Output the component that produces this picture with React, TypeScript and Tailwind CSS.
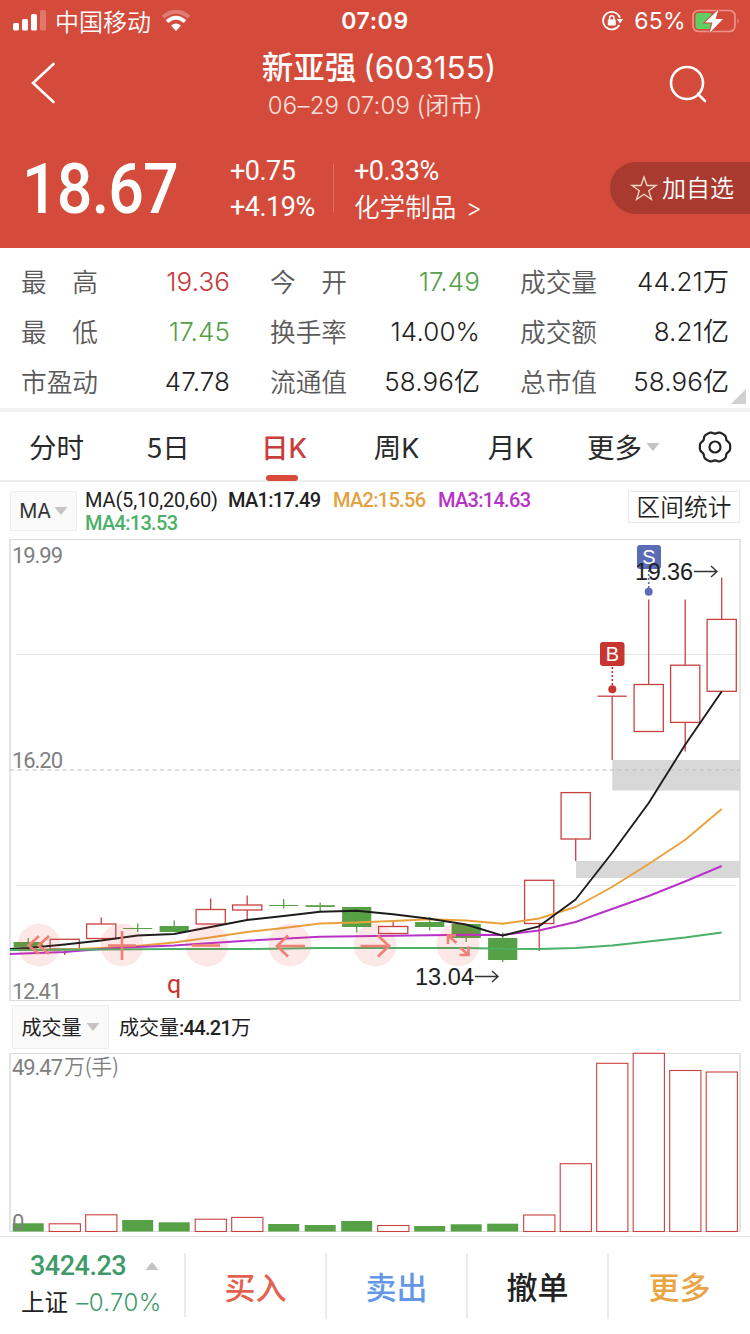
import React from "react";

type Quote = { label: string; value: string; color?: string };

type Candle = {
	up: boolean;
	top: number;
	bottom: number;
	high?: number;
	low?: number;
	volTop: number;
};

const STEP = 36.5;
const FIRST_X = 28.2;
const RED = "#c9403f";
const GREEN = "#56a045";

const quotes: Quote[][] = [
	[
		{ label: "最　高", value: "19.36", color: "text-[#c4383a]" },
		{ label: "今　开", value: "17.49", color: "text-[#549f48]" },
		{ label: "成交量", value: "44.21万" },
	],
	[
		{ label: "最　低", value: "17.45", color: "text-[#549f48]" },
		{ label: "换手率", value: "14.00%" },
		{ label: "成交额", value: "8.21亿" },
	],
	[
		{ label: "市盈动", value: "47.78" },
		{ label: "流通值", value: "58.96亿" },
		{ label: "总市值", value: "58.96亿" },
	],
];

const candles: Candle[] = [
	{ up: false, top: 942, bottom: 947.5, high: 938, low: 949, volTop: 1223.3 },
	{ up: true, top: 939.3, bottom: 949, low: 955, volTop: 1223.8 },
	{ up: true, top: 924, bottom: 938.5, high: 917.5, volTop: 1214.8 },
	{ up: false, top: 928, bottom: 929, high: 923.5, low: 932, volTop: 1220 },
	{ up: false, top: 926, bottom: 932, high: 920.5, volTop: 1222.3 },
	{ up: true, top: 909.5, bottom: 924, high: 898.5, volTop: 1219.2 },
	{ up: true, top: 905, bottom: 910, high: 895.5, low: 920, volTop: 1217.4 },
	{ up: false, top: 905, bottom: 906, high: 899, low: 908.5, volTop: 1224 },
	{ up: false, top: 905.2, bottom: 907, high: 902.5, low: 911, volTop: 1225 },
	{ up: false, top: 907, bottom: 927, low: 932.5, volTop: 1221 },
	{ up: true, top: 926.5, bottom: 933.5, high: 920.5, volTop: 1225.5 },
	{ up: false, top: 922, bottom: 927, high: 917, low: 930.5, volTop: 1226 },
	{ up: false, top: 924, bottom: 938, low: 942, volTop: 1224.3 },
	{ up: false, top: 938, bottom: 960, high: 932.5, low: 962, volTop: 1223.7 },
	{ up: true, top: 880.3, bottom: 923.5, low: 951, volTop: 1215 },
	{ up: true, top: 792.6, bottom: 839, low: 861, volTop: 1163.7 },
	{ up: true, top: 696.2, bottom: 696.2, low: 760, volTop: 1063.3 },
	{ up: true, top: 684.5, bottom: 731.5, high: 599.5, volTop: 1053.3 },
	{ up: true, top: 665.2, bottom: 722.4, high: 599.5, low: 751.5, volTop: 1070.5 },
	{ up: true, top: 619.4, bottom: 691.3, high: 577.5, volTop: 1072 },
];

const averages = [
	{
		color: "#e9a23b",
		points: "10,950 64.7,949.5 101,948 137,946 174,942.5 210,937.5 247,932 283.7,928 320,923.5 356,922.5 393,921 429.7,919.3 466,920.5 502.6,923.8 539,918.5 575.6,907 612,887 648.7,864 685,840 721.7,809",
	},
	{
		color: "#b832c8",
		points: "10,954 64.7,952 101,949 137,947 174,945.5 250,940.5 320,936.7 393,935.8 466,934.7 502,935 539,930.5 575.6,922 612,909 648.7,896 685,881.5 721.7,866",
	},
	{
		color: "#1d1d1d",
		points: "10,949 28,948 64.7,944.5 101,940.5 137.7,935.5 174,934 210.7,927 247,920 283.7,916 320,911.8 356.7,910.8 393,914.3 429.7,918.7 466,924.5 502.6,935.7 539,926.3 575.6,899.5 612,853 648.7,803 685,745 721.7,691.5",
	},
	{
		color: "#4cb068",
		points: "10,950 101,949.5 174,949 250,949 320,948 466,948 502,948.8 539,949 575.6,948 612,945.5 648.7,941.5 685,937.5 721.7,932.5",
	},
];

const controls = [39, 122, 207, 290, 375, 458];

// six-lobed outline of the settings gear
const gearPoints = Array.from({ length: 72 }, (_, i) => {
	const a = (i / 72) * Math.PI * 2;
	const r = 14.6 + 0.9 * Math.cos(a * 6) - 0.35 * Math.cos(a * 12);
	return `${(r * Math.cos(a)).toFixed(2)},${(r * Math.sin(a)).toFixed(2)}`;
}).join(" ");

function StatusBar() {
	return (
		<div className="grid h-10 grid-cols-3 items-center text-white">
			<div className="flex items-center pl-3">
				<svg width="34" height="22" viewBox="0 0 34 22" fill="#fff">
					<rect x="1" y="13" width="6" height="7.500" rx="1.500" />
					<rect x="10" y="9" width="6" height="11.500" rx="1.500" />
					<rect x="19" y="4" width="6" height="16.500" rx="1.500" />
					<rect x="28" y="0" width="6" height="20.500" rx="1.500" opacity=".25" />
				</svg>
				<span className="ml-[9px] text-[24px] font-[350] leading-[36px]">中国移动</span>
				<svg className="ml-[10px]" width="30" height="22" viewBox="0 0 30 22" fill="none" stroke="#fff">
					<path d="M2 7Q15 -3.500 28 7" strokeWidth="4" opacity=".28" />
					<path d="M6 11.500Q15 4 24 11.500" strokeWidth="4" />
					<path d="M10 15.500Q15 11.500 20 15.500L15 21Z" fill="#fff" stroke="none" />
				</svg>
			</div>
			<div className="text-center font-['Inter'] text-[23px] font-semibold leading-10 tracking-[0.6px]">07:09</div>
			<div className="flex items-center justify-end pr-[10px]">
				<svg width="22" height="20" viewBox="0 0 22 20" fill="none" stroke="#fff" strokeWidth="1.800">
					<path d="M18 7A8.700 8.700 0 1 0 17.300 14" />
					<path d="M14.800 8h6.400l-3.200 4.400z" fill="#fff" stroke="none" />
					<rect x="5.800" y="8.500" width="8" height="6" rx="1" fill="#fff" stroke="none" />
					<path d="M7.600 9V7a2.200 2.200 0 0 1 4.400 0v2" strokeWidth="1.500" />
				</svg>
				<span className="ml-[10px] font-['Inter'] text-[23px] leading-[42px] tracking-[0.3px]">65%</span>
				<svg className="ml-[6px]" width="48" height="24" viewBox="0 0 48 24">
					<rect x="1" y="1.500" width="42" height="21" rx="5.500" fill="none" stroke="#ee958b" strokeWidth="1.600" />
					<path d="M45.500 9q2.500 3 0 6z" fill="#ee958b" />
					<rect x="3.500" y="4" width="16.500" height="16" rx="3" fill="#5fcf63" />
					<path d="M26.500 0.500L13 13.500h7.500l-3 10.500L31 10h-7.500z" fill="#fff" stroke="#d44b3c" strokeWidth="2" paintOrder="stroke" />
				</svg>
			</div>
		</div>
	);
}

function Header() {
	return (
		<header className="h-[248px] bg-[#d44b3c] text-white">
			<StatusBar />
			<div className="flex h-[88px] items-start justify-between pl-[30px] pr-[43px]">
				<svg className="mt-[22px]" width="26" height="42" viewBox="0 0 26 42" fill="none" stroke="#fff" strokeWidth="2.600">
					<path d="M23.500 2L3 21l20.500 19" strokeLinecap="round" />
				</svg>
				<div className="ml-[25px] flex flex-col items-center">
					<h1 className="ml-[8px] mt-[5px] whitespace-nowrap text-[31.500px] font-medium leading-10">
						新亚强 <span className="font-['Inter'] text-[31.500px] font-normal tracking-[0px]">(603155)</span>
					</h1>
					<p className="mt-[-2px] whitespace-nowrap text-[24px] font-[350] leading-[36px] text-[#fce0dc]">
						<span className="font-['Inter'] text-[24px] tracking-[0.200px]">06–29 07:09 </span>
						<span className="tracking-[0.300px]">(闭市)</span>
					</p>
				</div>
				<svg className="mt-[25px]" width="38" height="38" viewBox="0 0 38 38" fill="none" stroke="#fff" strokeWidth="2.600">
					<circle cx="18" cy="18" r="16" />
					<path d="M29 29l7 7" strokeLinecap="round" />
				</svg>
			</div>
			<div className="flex h-[120px] items-start">
				<div className="w-[230px] pl-[22px] pt-[25px] font-['Roboto'] text-[71px] font-medium leading-[71px]">
					<span className="inline-block origin-left scale-x-[0.885] tracking-[-1px]">18.67</span>
				</div>
				<div className="w-[103px] pt-[25px] font-['Roboto'] text-[27px] leading-9 tracking-[-0.500px]">
					<div>+0.75</div>
					<div>+4.19%</div>
				</div>
				<div className="mt-9 h-12 w-px bg-[#e07064]" />
				<div className="w-[276px] pl-5 pt-[25px] leading-9">
					<div className="font-['Roboto'] text-[27px] tracking-[-0.500px]">+0.33%</div>
					<div className="mt-[-1px] text-[25.600px] font-[350]">
						化学制品 <span className="ml-[4px] font-['Inter'] text-[24px]">&gt;</span>
					</div>
				</div>
				<button
					type="button"
					className="mt-[34px] flex h-[52px] flex-1 items-center rounded-l-full bg-[#a93a2f] pl-5 text-[24px] font-[350] leading-[50px]"
				>
					<svg width="28" height="26" viewBox="0 0 28 26" fill="none" stroke="#fbd9c8" strokeWidth="1.300">
						<path d="M14 2l3 8.500h9l-7.300 5.300 2.800 8.700L14 19.300l-7.500 5.200 2.800-8.700L2 10.500h9z" />
					</svg>
					<span className="ml-1 mt-[-2px] whitespace-nowrap">加自选</span>
				</button>
			</div>
		</header>
	);
}

function Quotes() {
	return (
		<section className="relative h-[164px] border-b-4 border-[#f1f1f1] pl-[21px] pr-[20px] pt-[9px]">
			{quotes.map((row, i) => (
				<div key={i} className="grid h-[50px] grid-cols-[209px_210px_209px] gap-[40px]">
					{row.map((q) => (
						<div key={q.label} className="flex justify-between leading-[50px]">
							<span className="mt-[-1px] text-[25.700px] font-[350] text-[#5a5a5a]">{q.label}</span>
							<span
								className={`font-['Inter','Noto_Sans_CJK_SC',sans-serif] text-[26px] font-[350] tracking-[0.100px] ${q.color ?? "text-[#222]"}`}
							>
								{q.value}
							</span>
						</div>
					))}
				</div>
			))}
			<svg className="absolute bottom-[4px] right-1" width="15" height="15" viewBox="0 0 15 15">
				<path d="M15 0v15H0z" fill="#d0d0d0" />
			</svg>
		</section>
	);
}

function Caret({ up = false }: { up?: boolean }) {
	return (
		<svg width="14" height="10" viewBox="0 0 14 10" className={up ? "rotate-180" : ""}>
			<path d="M0.500 1h13L7 9z" fill="#c4c4c4" />
		</svg>
	);
}

function Tabs() {
	return (
		<nav className="flex h-[70px] items-start border-b-2 border-[#ececec] text-[27.500px] leading-[69px] text-[#2a2a2a]">
			<span className="w-[113px] text-center">分时</span>
			<span className="w-[111px] text-center">5日</span>
			<span className="relative w-[120px] text-center font-medium text-[#cb3c3d]">
				日<span className="font-['Inter'] text-[27px]">K</span>
				<i className="absolute bottom-[2px] left-[42px] h-[6px] w-8 rounded-full bg-[#d94a3b]" />
			</span>
			<span className="w-[105px] text-center">
				周<span className="font-['Inter'] text-[27px]">K</span>
			</span>
			<span className="w-[123px] text-center">
				月<span className="font-['Inter'] text-[27px]">K</span>
			</span>
			<span className="flex w-[125px] items-center pl-[15px]">
				更多
				<span className="ml-1 flex">
					<Caret />
				</span>
			</span>
			<svg className="mt-[18px]" width="36" height="34" viewBox="-18 -17 36 34" fill="none" stroke="#222" strokeWidth="2.200">
				<polygon points={gearPoints} strokeLinejoin="round" />
				<circle r="5.500" />
			</svg>
		</nav>
	);
}

function Indicators() {
	return (
		<div className="flex h-[57px] items-start pl-[10px] pr-[10px]">
			<div className="mt-[9px] flex h-10 w-[67px] items-center justify-center gap-[3px] border border-[#eee] bg-[#fafafa] font-['Inter'] text-[20px] tracking-[-0.300px] text-[#333]">
				MA <Caret />
			</div>
			<div className="ml-[8px] mt-[7px] w-[480px] whitespace-nowrap font-['Roboto'] text-[20px] font-medium leading-[23px] tracking-[-0.700px]">
				<div className="flex">
					<span className="w-[143px] font-normal tracking-[-0.150px] text-[#222]">MA(5,10,20,60)</span>
					<span className="w-[105px] text-[#222]">MA1:17.49</span>
					<span className="w-[105px] text-[#e3a13f]">MA2:15.56</span>
					<span className="text-[#b832c8]">MA3:14.63</span>
				</div>
				<div className="text-[#4cb068]">MA4:13.53</div>
			</div>
			<div className="ml-auto mt-[9px] h-8 w-[112px] border border-[#e8e8e8] text-center text-[23.700px] font-[350] leading-[28px] text-[#222]">
				区间统计
			</div>
		</div>
	);
}

function CandleShape({ c, i }: { c: Candle; i: number }) {
	const x = FIRST_X + i * STEP;
	const color = c.up ? RED : GREEN;
	return (
		<g stroke={color} strokeWidth="1.300">
			{c.high && <line x1={x} x2={x} y1={c.high} y2={c.top} />}
			{c.low && <line x1={x} x2={x} y1={c.bottom} y2={c.low} />}
			{c.up ? (
				<rect x={x - 14.6} y={c.top} width="29.200" height={c.bottom - c.top} fill="none" />
			) : (
				<rect x={x - 14.6} y={c.top} width="29.200" height={c.bottom - c.top} fill={GREEN} stroke="none" />
			)}
			{c.top === c.bottom && <line x1={x - 14.6} x2={x + 14.6} y1={c.top} y2={c.top} />}
		</g>
	);
}

function KLineChart() {
	return (
		<svg className="block" width="750" height="462" viewBox="0 539 750 462">
			<g stroke="#e6e6e6" strokeWidth="1">
				<path d="M16 654.500H736M16 885.500H736" />
				<path d="M10 539.500H740M10 1000.500H740" stroke="#dcdcdc" />
				<path d="M10 539V1001M740 539V1001" stroke="#dedede" strokeWidth="1.600" />
			</g>
			<rect x="612.300" y="760" width="128" height="30.500" fill="#d8d8d8" />
			<rect x="576" y="861" width="164" height="17" fill="#d8d8d8" />
			<path d="M10 770H740" stroke="#bdbdbd" strokeWidth="1.200" strokeDasharray="4 3.500" />

			{candles.map((c, i) => (
				<CandleShape key={i} c={c} i={i} />
			))}
			{averages.map((a) => (
				<polyline key={a.color} points={a.points} fill="none" stroke={a.color} strokeWidth="1.900" strokeLinejoin="round" />
			))}

			{/* pan and zoom controls */}
			{controls.map((x) => (
				<circle key={x} cx={x} cy="945" r="21.500" fill="#e8483c" opacity=".12" />
			))}
			<g fill="none" stroke="#f07f74" strokeWidth="2.600">
				<path d="M39 936L28.500 945.500L39 954M49 936L38.500 945.500L49 954" />
				<path d="M108 945.500H136M122 931V960" />
				<path d="M192 945.500H220" />
				<path d="M305 946H277M288 935.500L277 946L288 956.500" />
				<path d="M360.500 946H389M378 935.500L389 946L378 956.500" />
				<path d="M456.500 943L448 935.500M448 944V935.500H456M460 947.500L468.500 955M468.500 946.500V955H459.500" />
			</g>

			{/* trade markers */}
			<rect x="637" y="545" width="24" height="24" rx="3" fill="#5a6cb5" />
			<path d="M648.700 570V588" stroke="#5a6cb5" strokeWidth="1.600" strokeDasharray="2 2" />
			<circle cx="648.700" cy="591.700" r="4" fill="#5a6cb5" />
			<rect x="600" y="642" width="24.500" height="24" rx="3" fill="#c8352f" />
			<path d="M612.300 667V686" stroke="#c8352f" strokeWidth="1.600" strokeDasharray="2 2" />
			<circle cx="612.300" cy="689.300" r="4" fill="#c8352f" />
			<g fill="#fff" fontFamily="Liberation Sans, sans-serif" fontSize="20" textAnchor="middle">
				<text x="649" y="564">S</text>
				<text x="612.300" y="661">B</text>
			</g>
			<g fill="#222" fontFamily="Liberation Sans, sans-serif" fontSize="23.500">
				<text x="635" y="580" textLength="58">19.36</text>
				<text x="415" y="985" textLength="59">13.04</text>
			</g>
			<g stroke="#333" strokeWidth="1.400" fill="none">
				<path d="M694 571.500H717M711 566L717 571.500L711 577" />
				<path d="M475 976.500H498M492 971L498 976.500L492 982" />
			</g>
			<g fill="#808080" fontFamily="Roboto, sans-serif" fontSize="22">
				<text x="12" y="563" textLength="51">19.99</text>
				<text x="12" y="768" textLength="51">16.20</text>
				<text x="12" y="998.500" textLength="50">12.41</text>
			</g>
			<text x="167" y="993" fill="#c8352f" fontFamily="Roboto, sans-serif" fontSize="25">
				q
			</text>
		</svg>
	);
}

function VolumeChart() {
	return (
		<>
			<div className="flex h-[51px] items-start pl-3 pt-1">
				<div className="flex h-[44px] w-[97px] items-center justify-center gap-1 border border-[#eee] bg-[#fafafa] text-[20px] text-[#222]">
					成交量 <Caret />
				</div>
				<div className="ml-[10px] text-[20px] leading-[44px] text-[#222]">
					成交量<span className="font-['Roboto'] text-[20px] font-medium tracking-[-0.700px]">:44.21</span>万
				</div>
			</div>
			<svg className="block" width="750" height="184" viewBox="0 1052 750 184">
				<path d="M10 1053.500H740M10 1231.500H740" stroke="#dcdcdc" />
				<path d="M10 1053V1232M740 1053V1232" stroke="#dedede" strokeWidth="1.600" />
				{candles.map((c, i) => (
					<rect
						key={i}
						x={FIRST_X + i * STEP - 15.5}
						y={c.volTop}
						width={c.up ? 31.2 : 31}
						height={1231.5 - c.volTop}
						fill={c.up ? "#fff" : GREEN}
						stroke={c.up ? RED : "none"}
						strokeWidth="1.100"
					/>
				))}
				<g fill="#808080" fontFamily="Roboto, sans-serif" fontSize="22">
					<text x="12" y="1074.500" textLength="51">49.47</text>
					<text x="12" y="1230">0</text>
				</g>
				<text x="64" y="1074" fill="#808080" fontFamily="Noto Sans CJK SC, sans-serif" fontWeight="350" fontSize="21" textLength="55">
					万(手)
				</text>
			</svg>
		</>
	);
}

function TradeBar() {
	return (
		<footer className="flex h-[98px] items-start border-t border-[#e2e2e2]">
			<div className="flex h-full w-[184px] flex-col pl-[21px] pt-[11px]">
				<div className="flex items-center pl-[9px] font-['Roboto'] text-[27px] font-medium leading-9 tracking-[-0.500px] text-[#3f9a69]">
					3424.23
					<span className="ml-[19px] flex">
						<Caret up />
					</span>
				</div>
				<div className="mt-[-1px] whitespace-nowrap text-[23.500px] leading-9 text-[#222]">
					上证 <span className="ml-[3px] font-['Inter'] text-[24px] font-[350] tracking-[0.400px] text-[#3f9a69]">–0.70%</span>
				</div>
			</div>
			<div className="mt-[16px] grid h-[64px] flex-1 grid-cols-4 divide-x-2 divide-[#ebebeb] border-l-2 border-[#ebebeb] text-center text-[31px] font-medium leading-[66px]">
				<span className="text-[#e4614f]">买入</span>
				<span className="text-[#6497e8]">卖出</span>
				<span className="text-[#222]">撤单</span>
				<span className="text-[#e9a543]">更多</span>
			</div>
		</footer>
	);
}

export default function App() {
	return (
		<main className="h-[1334px] w-[750px] overflow-hidden bg-white font-['Noto_Sans_CJK_SC',sans-serif]">
			<Header />
			<Quotes />
			<Tabs />
			<Indicators />
			<KLineChart />
			<VolumeChart />
			<TradeBar />
		</main>
	);
}
